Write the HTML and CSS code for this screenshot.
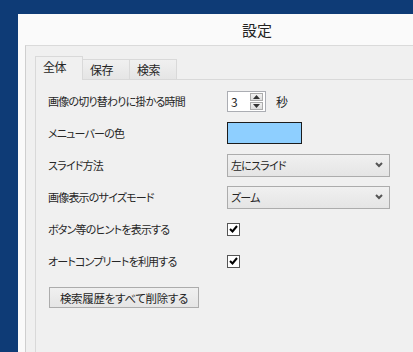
FILE: index.html
```html
<!DOCTYPE html>
<html lang="ja">
<head>
    <meta charset="UTF-8">
    <title>設定</title>
    <link rel="stylesheet" href="styles.css">
</head>
<body>
    <div class="window">
        <div class="titlebar">設定</div>
        <div class="client">
            <div class="tabs">
                <div class="tab active">全体</div>
                <div class="tab">保存</div>
                <div class="tab">検索</div>
            </div>
            <div class="panel">
                <div class="row">
                    <span class="label">画像の切り替わりに掛かる時間</span>
                    <div class="spin">
                        <span class="spin-value">3</span>
                        <div class="spin-buttons">
                            <div class="spin-btn">
                                <svg width="7" height="4" viewBox="0 0 7 4"><path d="M0 4 L3.5 0 L7 4 Z" fill="#333"/></svg>
                            </div>
                            <div class="spin-btn">
                                <svg width="7" height="4" viewBox="0 0 7 4"><path d="M0 0 L3.5 4 L7 0 Z" fill="#333"/></svg>
                            </div>
                        </div>
                    </div>
                    <span class="unit">秒</span>
                </div>
                <div class="row">
                    <span class="label">メニューバーの色</span>
                    <div class="swatch"></div>
                </div>
                <div class="row">
                    <span class="label">スライド方法</span>
                    <div class="combo">
                        <span>左にスライド</span>
                        <svg width="8" height="6" viewBox="0 0 8 6"><path d="M1 1 L4 4 L7 1" fill="none" stroke="#555" stroke-width="2"/></svg>
                    </div>
                </div>
                <div class="row">
                    <span class="label">画像表示のサイズモード</span>
                    <div class="combo">
                        <span>ズーム</span>
                        <svg width="8" height="6" viewBox="0 0 8 6"><path d="M1 1 L4 4 L7 1" fill="none" stroke="#555" stroke-width="2"/></svg>
                    </div>
                </div>
                <div class="row">
                    <span class="label">ボタン等のヒントを表示する</span>
                    <div class="check">
                        <svg width="9" height="8" viewBox="0 0 9 8"><path d="M1 4 L3.5 6.5 L8 1" fill="none" stroke="#000" stroke-width="2"/></svg>
                    </div>
                </div>
                <div class="row">
                    <span class="label">オートコンプリートを利用する</span>
                    <div class="check">
                        <svg width="9" height="8" viewBox="0 0 9 8"><path d="M1 4 L3.5 6.5 L8 1" fill="none" stroke="#000" stroke-width="2"/></svg>
                    </div>
                </div>
                <div class="button-row">
                    <button type="button" class="btn">検索履歴をすべて削除する</button>
                </div>
            </div>
        </div>
    </div>
</body>
</html>
```

FILE: styles.css
```css
body {
    margin: 0;
    width: 413px;
    height: 352px;
    overflow: hidden;
    background-color: #0e3b76;
    font-family: "Noto Sans CJK JP", "Noto Sans", sans-serif;
    font-size: 11px;
    letter-spacing: -0.8px;
    color: #262626;
    font-feature-settings: "palt";
}

.window {
    margin-left: 18px;
    margin-top: 14px;
    width: 395px;
    height: 338px;
    background-color: #fafafa;
    display: flex;
    flex-direction: column;
}

.titlebar {
    height: 31px;
    line-height: 31px;
    text-align: center;
    padding-left: 83px;
    font-size: 15px;
    letter-spacing: 0;
    color: #222;
}

.client {
    flex: 1;
    margin-left: 7px;
    background-color: #f0f0f0;
    border-top: 1px solid #dadada;
    border-left: 1px solid #cfcfcf;
    padding: 9px 0 0 9px;
    display: flex;
    flex-direction: column;
}

/* tabs */
.tabs {
    display: flex;
    align-items: flex-end;
    height: 24px;
    font-size: 12px;
    letter-spacing: -0.4px;
}

.tab {
    width: 47px;
    height: 20px;
    line-height: 19px;
    padding-left: 7px;
    box-sizing: border-box;
    border: 1px solid #d9d9d9;
    border-bottom: none;
    border-left: none;
    background: linear-gradient(#f0f0f0, #e5e5e5);
}

.tab.active {
    width: 48px;
    height: 24px;
    line-height: 20px;
    border-left: 1px solid #d9d9d9;
    background: #f0f0f0;
    position: relative;
    top: 1px;
    z-index: 1;
}

.panel {
    flex: 1;
    border-top: 1px solid #d9d9d9;
    border-left: 1px solid #d9d9d9;
    padding: 10px 0 0 12px;
    display: flex;
    flex-direction: column;
    gap: 10px;
}

.row {
    display: flex;
    align-items: center;
    height: 22px;
}

.label {
    width: 179px;
}

/* spin box */
.spin {
    width: 39px;
    height: 21px;
    box-sizing: border-box;
    border: 1px solid #abadb3;
    background: #fff;
    display: flex;
    align-items: center;
    padding-left: 3px;
    font-size: 12px;
}

.spin-value {
    flex: 1;
}

.spin-buttons {
    display: flex;
    flex-direction: column;
    gap: 1px;
    margin-right: 2px;
}

.spin-btn {
    width: 13px;
    height: 8px;
    box-sizing: border-box;
    border: 1px solid #acacac;
    background: linear-gradient(#f2f2f2, #dedede);
    display: flex;
    align-items: center;
    justify-content: center;
}

.unit {
    margin-left: 10px;
    font-size: 12px;
}

.swatch {
    width: 75px;
    height: 22px;
    box-sizing: border-box;
    border: 1px solid #1c1c1c;
    background-color: #8ecfff;
}

/* combo boxes */
.combo {
    width: 163px;
    height: 23px;
    box-sizing: border-box;
    border: 1px solid #acacac;
    background: linear-gradient(#f0f0f0, #e5e5e5);
    display: flex;
    align-items: center;
    justify-content: space-between;
    padding: 0 6px 0 3px;
}

.check {
    width: 13px;
    height: 13px;
    box-sizing: border-box;
    border: 1px solid #555;
    background: #fff;
    display: flex;
    align-items: center;
    justify-content: center;
}

.button-row {
    margin-top: 5px;
    padding-left: 1px;
}

.btn {
    width: 150px;
    height: 21px;
    padding: 0;
    border: 1px solid #acacac;
    background: linear-gradient(#f0f0f0, #e5e5e5);
    font-family: inherit;
    font-size: 11.5px;
    letter-spacing: -0.3px;
    color: #262626;
    font-feature-settings: "palt";
}
```
